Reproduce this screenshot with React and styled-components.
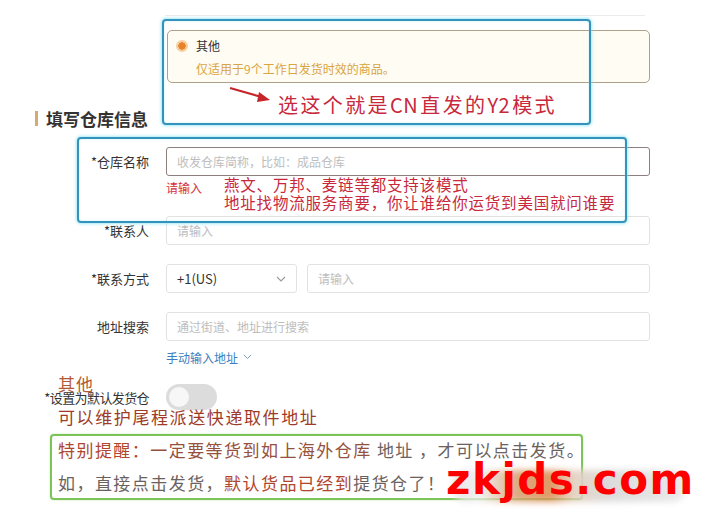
import React from "react";
import styled, { createGlobalStyle } from "styled-components";

const Global = createGlobalStyle`
  html, body { margin: 0; padding: 0; background: #fff; }
  body { font-family: "Noto Sans CJK SC", "Noto Sans", sans-serif; }
  * { box-sizing: border-box; }
`;

const Page = styled.div`
  position: relative;
  width: 715px;
  height: 525px;
  overflow: hidden;
  background: #fff;
  font-family: "Noto Sans CJK SC", "Noto Sans", sans-serif;
`;

const TopRule = styled.div`
  margin: 15px 0 0 165px;
  width: 480px;
  height: 1px;
  background: #ececec;
`;

const OptionCard = styled.div`
  margin: 14px 0 0 167px;
  width: 483px;
  height: 53px;
  border: 1px solid #ada189;
  border-radius: 5px;
  background: #fffcf3;
  padding: 9px 0 0 8px;
`;

const OptionTitle = styled.div`
  display: flex;
  align-items: center;
  gap: 8px;
  height: 12px;
  font-size: 12px;
  color: #333;
  line-height: 12px;
`;

const Radio = styled.span`
  width: 12px;
  height: 12px;
  border-radius: 50%;
  border: 2px solid #f6cfa0;
  background: radial-gradient(circle, #e8822a 0 3.5px, #fbe3c4 4px);
  flex: none;
`;

const OptionDesc = styled.div`
  margin: 9px 0 0 20px;
  font-size: 12px;
  line-height: 16px;
  color: #d9a441;
`;

const Heading = styled.h2`
  margin: 25px 0 0 35px;
  display: flex;
  align-items: center;
  gap: 8px;
  height: 20px;
  font-size: 17px;
  font-weight: 700;
  color: #333;
  &::before {
    content: "";
    width: 3px;
    height: 15px;
    background: #d6ab70;
  }
`;

const Form = styled.div`
  margin-top: 19px;
  width: 650px;
`;

const Row = styled.div`
  display: grid;
  grid-template-columns: 149px 1fr;
  column-gap: 17px;
  align-items: center;
  margin-top: ${(p) => p.$mt || 0}px;
`;

const Label = styled.div`
  text-align: right;
  font-size: 13px;
  color: #333;
  white-space: nowrap;
  letter-spacing: ${(p) => (p.$tight ? "-0.6px" : "0")};
`;

const Input = styled.div`
  height: 29px;
  border: ${(p) => (p.$error ? "1.5px solid #8e7f7f" : "1px solid #e2e2e2")};
  border-radius: 3px;
  padding: 0 10px;
  display: flex;
  align-items: center;
  font-size: 12px;
  color: #bdbdbd;
  background: #fff;
  flex: ${(p) => (p.$grow ? 1 : "none")};
`;

const Error = styled.div`
  grid-column: 2;
  margin-top: 4px;
  height: 16px;
  font-size: 12px;
  line-height: 16px;
  color: #d6303c;
`;

const Pair = styled.div`
  display: flex;
  gap: 10px;
`;

const Select = styled.div`
  width: 131px;
  height: 29px;
  border: 1px solid #e2e2e2;
  border-radius: 3px;
  padding: 0 10px;
  display: flex;
  align-items: center;
  justify-content: space-between;
  font-size: 13px;
  color: #333;
`;

const LinkRow = styled.div`
  margin: 9px 0 0 166px;
  display: flex;
  align-items: center;
  gap: 5px;
  height: 14px;
  font-size: 12px;
  color: #3b7fc0;
`;

const Toggle = styled.span`
  width: 51px;
  height: 26px;
  border-radius: 13px;
  background: #dcdcdc;
  position: relative;
  display: block;
  &::after {
    content: "";
    position: absolute;
    left: 3px;
    top: 3px;
    width: 20px;
    height: 20px;
    border-radius: 50%;
    background: #f7f7f7;
  }
`;

const BlueBox = styled.div`
  position: absolute;
  left: ${(p) => p.$x}px;
  top: ${(p) => p.$y}px;
  width: ${(p) => p.$w}px;
  height: ${(p) => p.$h}px;
  border: 2px solid #3592bb;
  border-radius: 4px;
  box-shadow: 0 0 3px 1px rgba(130, 225, 245, 0.75), inset 0 0 2px rgba(130, 225, 245, 0.6);
  pointer-events: none;
`;

const Note = styled.div`
  position: absolute;
  left: ${(p) => p.$x}px;
  top: ${(p) => p.$y}px;
  font-size: ${(p) => p.$size}px;
  letter-spacing: ${(p) => p.$ls || 0}px;
  line-height: ${(p) => p.$lh || 1.2};
  color: ${(p) => p.$color};
  white-space: nowrap;
`;

const Latin = styled.span`
  letter-spacing: 0.5px;
  margin-right: 2px;
`;

const Arrow = styled.svg`
  position: absolute;
  left: 225px;
  top: 82px;
  overflow: visible;
`;

const GreenBox = styled.div`
  position: absolute;
  left: 50px;
  top: 434px;
  width: 533px;
  height: 66px;
  border: 2px solid #7cc45a;
  border-radius: 4px;
  box-shadow: 0 0 2px rgba(160, 225, 120, 0.7);
  padding: 0 6px;
  font-size: 17px;
  letter-spacing: 1.45px;
  line-height: 33px;
  white-space: nowrap;
  color: #6b6260;
  background: #fff;
`;

const GreenText = styled.div`
  margin-top: -3px;
`;

const Span = styled.span`
  color: ${(p) => p.$c};
`;

const Smudge = styled.div`
  position: absolute;
  left: 452px;
  top: 470px;
  width: 234px;
  height: 32px;
  border-radius: 14px;
  background: linear-gradient(to right, #e3e3e3 0%, #efefef 12%, #d9a274 28%, #dc8e55 42%, #e4d0c0 52%, #d8d8d8 66%, #e8e8e8 100%);
  filter: blur(3px);
  opacity: 0.9;
`;

const Watermark = styled.div`
  position: absolute;
  left: 446px;
  top: 455px;
  font-family: "DejaVu Sans", Verdana, sans-serif;
  font-weight: 700;
  font-size: 42px;
  letter-spacing: 1.5px;
  line-height: 50px;
  color: #ff0000;
`;

const Chevron = ({ size = 10, color = "#999" }) => (
  <svg width={size} height={size * 0.6} viewBox="0 0 10 6">
    <path d="M1 1 L5 5 L9 1" fill="none" stroke={color} strokeWidth="1.1" />
  </svg>
);

export default function App() {
  return (
    <Page>
      <Global />
      <TopRule />
      <OptionCard>
        <OptionTitle>
          <Radio />
          其他
        </OptionTitle>
        <OptionDesc>仅适用于9个工作日发货时效的商品。</OptionDesc>
      </OptionCard>
      <Heading>填写仓库信息</Heading>
      <Form>
        <Row>
          <Label>*仓库名称</Label>
          <Input $error>收发仓库简称，比如：成品仓库</Input>
          <Error>请输入</Error>
        </Row>
        <Row $mt={20}>
          <Label>*联系人</Label>
          <Input>请输入</Input>
        </Row>
        <Row $mt={19}>
          <Label>*联系方式</Label>
          <Pair>
            <Select>
              +1(US)
              <Chevron />
            </Select>
            <Input $grow>请输入</Input>
          </Pair>
        </Row>
        <Row $mt={19}>
          <Label>地址搜索</Label>
          <Input>通过街道、地址进行搜索</Input>
        </Row>
        <LinkRow>
          手动输入地址
          <Chevron size={9} color="#7a9cc0" />
        </LinkRow>
        <Row $mt={20}>
          <Label $tight>*设置为默认发货仓</Label>
          <Toggle />
        </Row>
      </Form>

      <BlueBox $x={162} $y={19} $w={429} $h={106} />
      <BlueBox $x={77} $y={137} $w={550} $h={86} />

      <Arrow width="50" height="24">
        <path d="M5 6 L40 16" stroke="#c4262c" strokeWidth="2.2" fill="none" />
        <path d="M34 10 L45 18 L32 20 Z" fill="#c4262c" />
      </Arrow>

      <Note $x={278} $y={93} $size={20} $ls={2.4} $color="#c8283c">
        选这个就是<Latin>CN</Latin>直发的<Latin>Y2</Latin>模式
      </Note>
      <Note $x={224} $y={175} $size={15.5} $ls={0.8} $lh="18px" $color="#c8283c">
        燕文、万邦、麦链等都支持该模式
        <br />
        地址找物流服务商要，你让谁给你运货到美国就问谁要
      </Note>
      <Note $x={58} $y={374} $size={17} $ls={1} $color="#b35a34">
        其他
      </Note>
      <Note $x={58} $y={407} $size={17} $ls={1.6} $color="#9e3b28">
        可以维护尾程派送快递取件地址
      </Note>

      <GreenBox>
        <GreenText>
          <Span $c="#b0462e">特别提醒：</Span>
          <Span $c="#95503e">一定要等货到如上海外仓库</Span> 地址 ，才可以点击发货。
          <br />
          如，直接点击发货，<Span $c="#b0462e">默认货品已经到</Span>提货仓了！
        </GreenText>
      </GreenBox>

      <Smudge />
      <Watermark>zkjds.com</Watermark>
    </Page>
  );
}
